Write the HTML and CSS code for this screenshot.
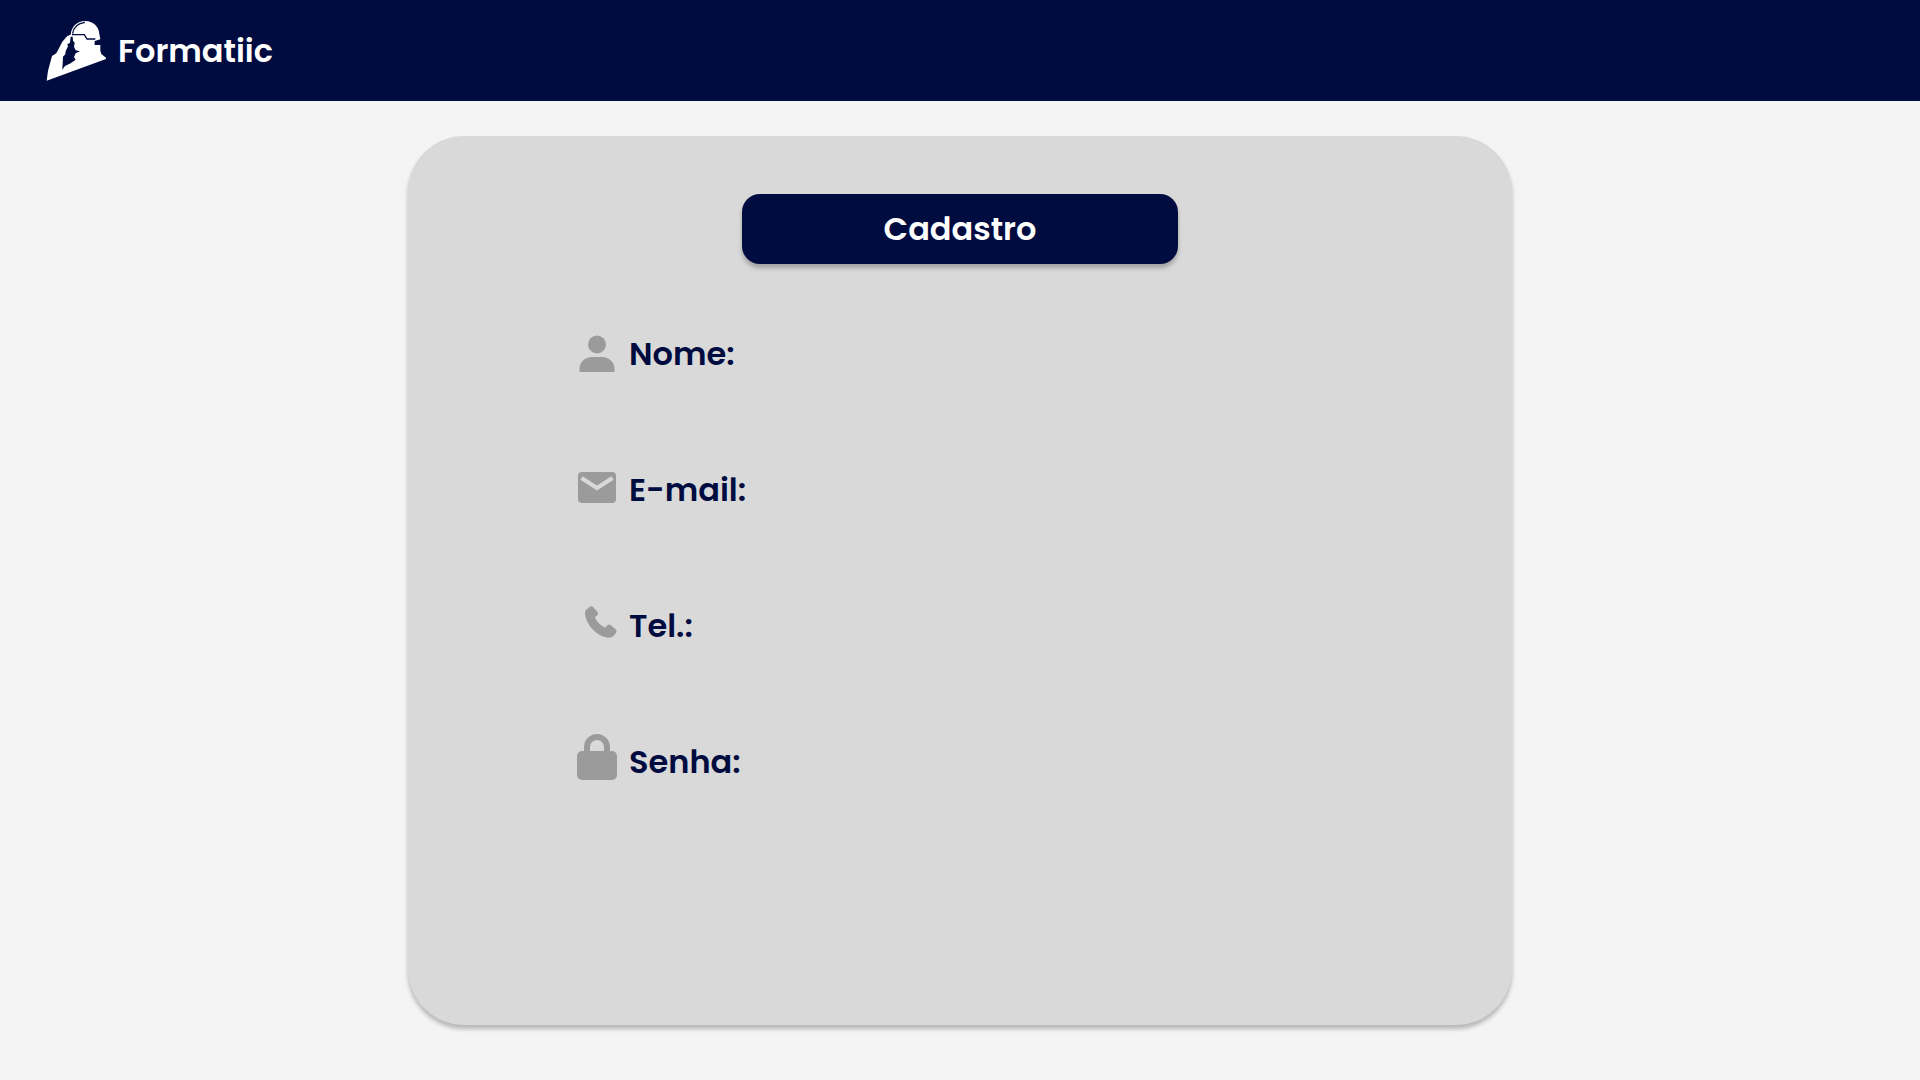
FILE: index.html
```html
<!DOCTYPE html>
<html lang="pt-BR">
<head>
<meta charset="utf-8">
<meta name="viewport" content="width=device-width, initial-scale=1">
<title>Formatiic</title>
<link rel="stylesheet" href="styles.css">
</head>
<body>
<header class="topbar">
  <a class="brand" href="#">
    <svg class="brand-logo" viewBox="48 30 183 183" aria-hidden="true">
      <path fill="#fff" d="M50 212L54 182 66 138 79 130 97 95 112 78 122 74C124 50 142 33 165 33C190 33 207 50 208 72L211 88 194 93V105H211V122L214 132 228 143V147L50 212Z"/>
      <path class="logo-cut" d="M122 80L120 98 112 103 114 109 107 124 106 133 99 140 97 179 105 168 122 160 137 149 132 141 137 130 150 124 137 121 132 110 134 98 129 92 128 80Z"/>
      <path class="logo-line" d="M128 71C130 54 141 40 165 37M126 74H163L171 87H196"/>
    </svg>
    <span>Formatiic</span>
  </a>
</header>
<main class="page">
  <form class="card">
    <button class="submit" type="submit">Cadastro</button>
    <div class="fields">
      <div class="field">
        <svg class="icon" viewBox="0 0 42 56" aria-hidden="true"><circle cx="21" cy="18.500" r="9"/><path d="M3.500 46V43C3.500 36 9 31 16 31H26C33 31 38.500 36 38.500 43V46Z"/></svg>
        <label for="nome">Nome:</label>
        <input id="nome" type="text">
      </div>
      <div class="field">
        <svg class="icon" viewBox="0 0 42 56" aria-hidden="true"><rect x="2" y="10" width="38" height="31" rx="4"/><path class="flap" d="M5.500 16L21 26 36.500 16"/></svg>
        <label for="email">E-mail:</label>
        <input id="email" type="email">
      </div>
      <div class="field">
        <svg class="icon" viewBox="0 0 42 56" aria-hidden="true"><path d="M9.500 12.500L13.500 9Q16 7.500 17.500 9.500L21.500 14Q22.500 15.500 21.500 17L18.800 19.500C21 24 24.500 27.500 29 29.700L31.500 27.300Q33 26 34.700 27.200L39.700 31.200Q41.500 33 40 34.800L37.500 38Q35.500 40 32 39.800C20 38 10 26 9 16Q9 13.500 9.500 12.500Z"/></svg>
        <label for="tel">Tel.:</label>
        <input id="tel" type="tel">
      </div>
      <div class="field">
        <svg class="icon" viewBox="0 0 42 56" aria-hidden="true"><rect x="1" y="17" width="40" height="29" rx="5"/><path class="shackle" d="M11 19V13A10 10 0 0 1 31 13V19"/></svg>
        <label for="senha">Senha:</label>
        <input id="senha" type="password">
      </div>
    </div>
  </form>
</main>
</body>
</html>
```
FILE: styles.css
```css
* { box-sizing: border-box; }
body {
  margin: 0;
  min-height: 100vh;
  background: #f4f4f4;
  color: #000b3f;
  font-family: Poppins, Inter, sans-serif;
  font-size: 32px;
  font-weight: 600;
  line-height: 48px;
}
.topbar {
  display: flex;
  align-items: center;
  padding: 20px 46px;
  background: #000b3f;
}
.brand {
  display: flex;
  align-items: center;
  gap: 11px;
  color: #fff;
  text-decoration: none;
}
.brand-logo { width: 61px; height: 61px; }
.logo-cut { fill: #000b3f; }
.logo-line { fill: none; stroke: #000b3f; stroke-width: 4; }
.page { padding: 35px 24px 55px; }
.card {
  max-width: 1104px;
  min-height: 889px;
  margin: 0 auto;
  padding: 58px 168px;
  border-radius: 56px;
  background: #d9d9d9;
  box-shadow: 0 4px 4px rgba(0, 0, 0, 0.25);
}
.submit {
  display: block;
  width: 100%;
  max-width: 436px;
  height: 70px;
  margin: 0 auto;
  border: 0;
  border-radius: 18px;
  background: #000b3f;
  color: #fff;
  font: inherit;
  box-shadow: 0 4px 4px rgba(0, 0, 0, 0.25);
}
.fields {
  display: flex;
  flex-direction: column;
  gap: 80px;
  margin-top: 62px;
}
.field {
  display: flex;
  align-items: center;
  gap: 11px;
}
.icon {
  flex: none;
  width: 42px;
  height: 56px;
  fill: #9b9b9b;
}
.flap { fill: none; stroke: #d9d9d9; stroke-width: 4; }
.shackle { fill: none; stroke: #9b9b9b; stroke-width: 6; }
.field input {
  flex: 1;
  min-width: 0;
  height: 48px;
  border: 0;
  background: transparent;
  color: inherit;
  font: inherit;
}
```
